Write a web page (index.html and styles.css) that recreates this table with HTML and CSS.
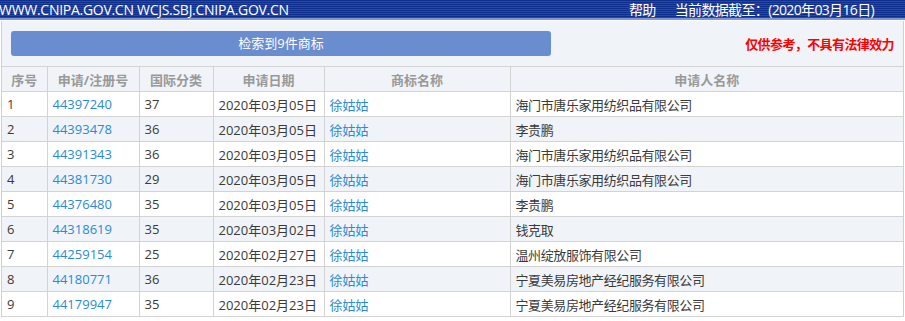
FILE: index.html
```html
<!DOCTYPE html>
<html lang="zh-CN">
<head>
<meta charset="utf-8">
<title>商标检索</title>
<link rel="stylesheet" href="styles.css">
</head>
<body>
<div class="topbar">
  <div class="site">WWW.CNIPA.GOV.CN WCJS.SBJ.CNIPA.GOV.CN</div>
  <div class="topright"><span class="help">帮助</span><span>当前数据截至：(2020年03月16日)</span></div>
</div>
<div class="main">
  <div class="toolbar">
    <div class="countbtn">检索到9件商标</div>
    <div class="notice">仅供参考，不具有法律效力</div>
  </div>
  <table class="result">
    <colgroup>
      <col class="c1"><col class="c2"><col class="c3"><col class="c4"><col class="c5"><col class="c6">
    </colgroup>
    <thead>
      <tr><th>序号</th><th>申请/注册号</th><th>国际分类</th><th>申请日期</th><th>商标名称</th><th>申请人名称</th></tr>
    </thead>
    <tbody>
      <tr><td>1</td><td><a>44397240</a></td><td>37</td><td>2020年03月05日</td><td><a>徐姑姑</a></td><td class="cn">海门市唐乐家用纺织品有限公司</td></tr>
      <tr><td>2</td><td><a>44393478</a></td><td>36</td><td>2020年03月05日</td><td><a>徐姑姑</a></td><td class="cn">李贵鹏</td></tr>
      <tr><td>3</td><td><a>44391343</a></td><td>36</td><td>2020年03月05日</td><td><a>徐姑姑</a></td><td class="cn">海门市唐乐家用纺织品有限公司</td></tr>
      <tr><td>4</td><td><a>44381730</a></td><td>29</td><td>2020年03月05日</td><td><a>徐姑姑</a></td><td class="cn">海门市唐乐家用纺织品有限公司</td></tr>
      <tr><td>5</td><td><a>44376480</a></td><td>35</td><td>2020年03月05日</td><td><a>徐姑姑</a></td><td class="cn">李贵鹏</td></tr>
      <tr><td>6</td><td><a>44318619</a></td><td>35</td><td>2020年03月02日</td><td><a>徐姑姑</a></td><td class="cn">钱克取</td></tr>
      <tr><td>7</td><td><a>44259154</a></td><td>25</td><td>2020年02月27日</td><td><a>徐姑姑</a></td><td class="cn">温州绽放服饰有限公司</td></tr>
      <tr><td>8</td><td><a>44180771</a></td><td>36</td><td>2020年02月23日</td><td><a>徐姑姑</a></td><td class="cn">宁夏美易房地产经纪服务有限公司</td></tr>
      <tr><td>9</td><td><a>44179947</a></td><td>35</td><td>2020年02月23日</td><td><a>徐姑姑</a></td><td class="cn">宁夏美易房地产经纪服务有限公司</td></tr>
    </tbody>
  </table>
</div>
</body>
</html>
```
FILE: styles.css
```css
html, body {
  margin: 0;
  padding: 0;
  background: #ffffff;
}
body {
  font-family: "Open Sans", "Noto Sans CJK SC", sans-serif;
  font-size: 13px;
  color: #333333;
}
.topbar {
  height: 18px;
  display: flex;
  justify-content: space-between;
  align-items: center;
  color: #ffffff;
  font-size: 14px;
  background: repeating-linear-gradient(to bottom, #0f2f8e 0, #0f2f8e 1px, #2448a8 1px, #2448a8 2px);
  border-bottom: 2px solid #7d98d8;
  box-shadow: 0 1px 0 #ffffff;
  overflow: hidden;
}
.site {
  letter-spacing: -0.28px;
  white-space: nowrap;
  margin-left: -1px;
}
.topright {
  display: flex;
  gap: 19px;
  margin-right: 31px;
  white-space: nowrap;
  letter-spacing: -0.65px;
}
.main {
  margin: 1px 1px 0 1px;
  background: #f0f4f8;
  border-left: 1px solid #d0d0d0;
  border-right: 1px solid #d0d0d0;
  padding-top: 9px;
}
.toolbar {
  display: flex;
  justify-content: space-between;
  align-items: center;
  padding: 0 9px 0 9px;
  height: 26px;
  margin-bottom: 10px;
}
.countbtn {
  width: 540px;
  height: 25px;
  line-height: 25px;
  background: #6a8dcf;
  border-radius: 3px;
  color: #ffffff;
  text-align: center;
}
.notice {
  color: #ff0000;
  font-weight: bold;
  font-size: 13px;
  letter-spacing: -0.6px;
}
.result {
  width: 100%;
  border-collapse: collapse;
  table-layout: fixed;
}
.c1 { width: 45px; }
.c2 { width: 92px; }
.c3 { width: 74px; }
.c4 { width: 111px; }
.c5 { width: 186px; }
.c6 { width: auto; }
.result th, .result td {
  border: 1px solid #d3d3d3;
  height: 24px;
  padding: 0 5px;
  white-space: nowrap;
  overflow: hidden;
}
.result tr > :first-child { border-left: none; }
.result tr > :last-child { border-right: none; }
.result th {
  color: #999999;
  font-weight: bold;
  background: #f0f4f8;
  text-align: center;
}
.result td {
  background: #ffffff;
  text-align: left;
  color: #3a3a3a;
}
.result td.cn {
  letter-spacing: -0.4px;
}
.result tbody tr:nth-child(even) td {
  background: #f0f4f8;
}
.result a {
  color: #2b8ad6;
  text-decoration: none;
}
```
